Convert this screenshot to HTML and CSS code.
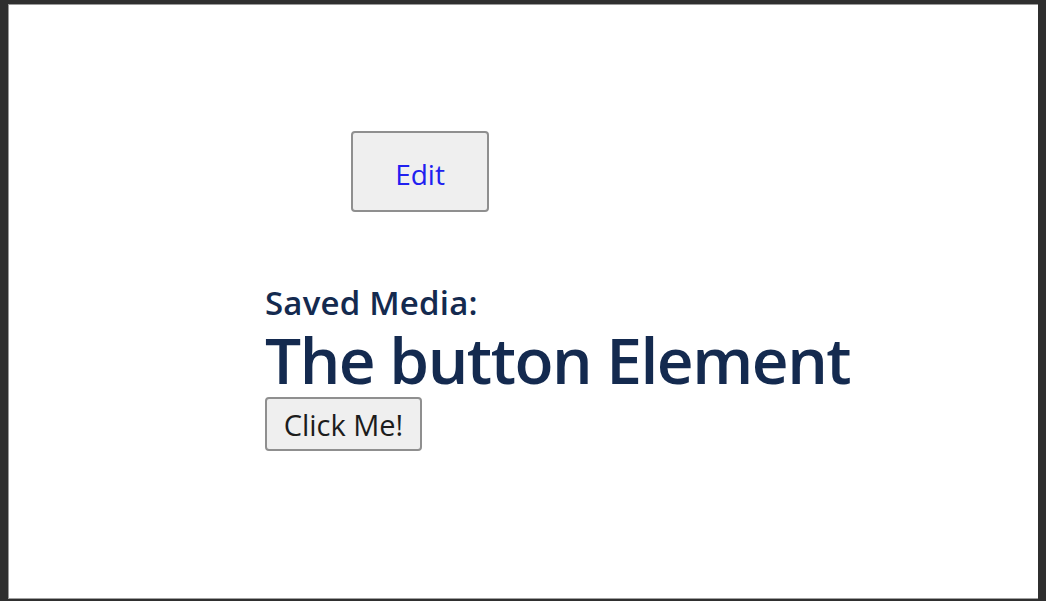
FILE: index.html
```html
<!DOCTYPE html>
<html>
<head>
<meta charset="utf-8">
<link rel="stylesheet" href="styles.css">
</head>
<body>
<div class="frame">
  <div class="edit-row">
    <button class="edit-btn">Edit</button>
  </div>
  <div class="content">
    <div class="saved">Saved Media:</div>
    <h1 class="title">The button Element</h1>
    <button class="click-btn">Click Me!</button>
  </div>
</div>
</body>
</html>
```

FILE: styles.css
```css
html, body {
  margin: 0;
  padding: 0;
  background: #2f2f2f;
  height: 100%;
}
body {
  padding: 4px 8px 2px 8px;
  box-sizing: border-box;
  font-family: "Open Sans", "Noto Sans", sans-serif;
}
.frame {
  height: 100%;
  box-sizing: border-box;
  background: #ffffff;
  border: 1px solid #9a9a9a;
  border-right: none;
  border-bottom-color: #a0a0a0;
  padding-left: 256px;
  padding-top: 126px;
}
.edit-row {
  padding-left: 86px;
}
.edit-btn {
  width: 138px;
  height: 81px;
  background: #efefef;
  border: 2px solid #8f8f8f;
  border-radius: 4px;
  color: #2020f0;
  font-family: "Open Sans", sans-serif;
  font-size: 28px;
  padding: 4px 0 0 0;
}
.content {
  margin-top: 70px;
  color: #142a4f;
}
.saved {
  font-size: 33px;
  font-weight: 600;
  line-height: 42px;
  letter-spacing: 0.2px;
}
.title {
  margin: 0;
  font-size: 64px;
  font-weight: 600;
  line-height: 72px;
  letter-spacing: -1.5px;
}
.click-btn {
  display: block;
  margin-top: 1px;
  width: 157px;
  height: 54px;
  background: #efefef;
  border: 2px solid #8f8f8f;
  border-radius: 4px;
  color: #1c1c1c;
  font-family: "Open Sans", sans-serif;
  font-size: 29px;
  padding: 0;
}
```
